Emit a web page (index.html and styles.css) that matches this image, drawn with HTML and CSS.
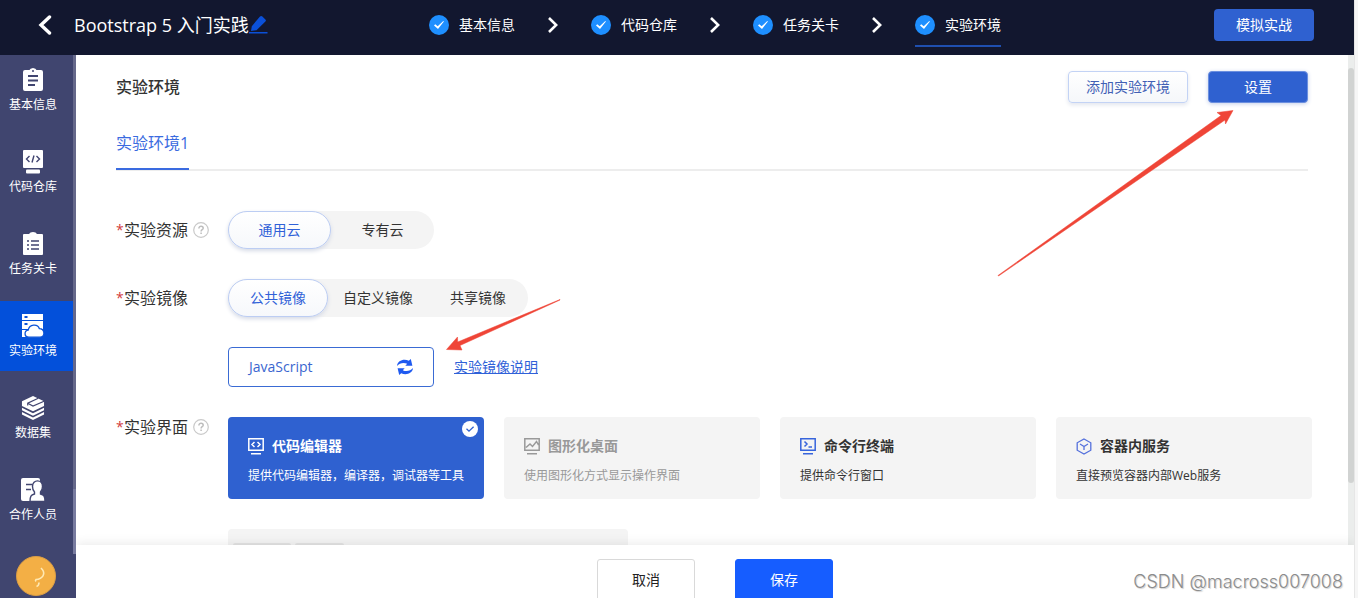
FILE: index.html
```html
<!DOCTYPE html>
<html lang="zh-CN">
<head>
<meta charset="utf-8">
<title>实验环境</title>
<link rel="stylesheet" href="styles.css">
</head>
<body>
<svg class="defs" aria-hidden="true">
  <symbol id="done" viewBox="0 0 20 20"><circle cx="10" cy="10" r="10" fill="#1e8fff"/><path d="M5 10.400l1.200-1.100 2.500 1.900 5.600-5.200.6.600-5.900 7.300z" fill="#fff"/></symbol>
  <symbol id="next" viewBox="0 0 10 16"><path d="M1 1l7.200 7L1 15" fill="none" stroke="#fff" stroke-width="2.600"/></symbol>
  <symbol id="help" viewBox="0 0 16 16"><circle cx="8" cy="8" r="7.300" fill="none" stroke="#c9c9c9" stroke-width="1.200"/><path d="M5.900 6.400c0-3 4.300-2.700 4.300-.2 0 1.500-2.100 1.500-2.100 3.200M8.100 10.600v1.500" fill="none" stroke="#bdbdbd" stroke-width="1.500"/></symbol>
</svg>
<div class="app">
  <header class="topbar">
    <div class="topbar-left">
      <button class="icon-btn back" aria-label="返回"><svg width="14" height="20" viewBox="0 0 14 20"><path d="M11.500 2L3 10l8.500 8" fill="none" stroke="#fff" stroke-width="3.400" stroke-linecap="round"/></svg></button>
      <h1 class="course">Bootstrap 5 入门实践</h1>
      <button class="icon-btn" aria-label="编辑"><svg width="19" height="20" viewBox="0 0 19 20" fill="#0b50d8"><path d="M2 16l.8-4.800L11 1.600q1.200-1.200 2.400 0l3 2.900q1 1 0 2L7.500 15.200z"/><path d="M0 17h18.500v1.500H0z"/></svg></button>
    </div>
    <nav class="steps">
      <a class="step" href="#"><svg width="20" height="20"><use href="#done"/></svg>基本信息</a>
      <svg class="next" width="10" height="16"><use href="#next"/></svg>
      <a class="step" href="#"><svg width="20" height="20"><use href="#done"/></svg>代码仓库</a>
      <svg class="next" width="10" height="16"><use href="#next"/></svg>
      <a class="step" href="#"><svg width="20" height="20"><use href="#done"/></svg>任务关卡</a>
      <svg class="next" width="10" height="16"><use href="#next"/></svg>
      <a class="step current" href="#"><svg width="20" height="20"><use href="#done"/></svg>实验环境</a>
    </nav>
    <div class="topbar-right"><button class="btn primary">模拟实战</button></div>
  </header>

  <div class="body">
    <aside class="sidebar">
      <nav class="side-nav">
        <a class="side-item" href="#"><svg width="22" height="24" viewBox="0 0 22 24"><path d="M3 2h4.500q.5-1.500 3.500-2 3 .5 3.500 2H19q2 0 2 2v17q0 2-2 2H3q-2 0-2-2V4q0-2 2-2z" fill="#fff"/><path d="M6 8h10M6 12.500h10M6 17h7" stroke="#414570" stroke-width="1.800"/><circle cx="11" cy="3" r="1" fill="#414570"/></svg>基本信息</a>
        <a class="side-item" href="#"><svg width="22" height="24" viewBox="0 0 22 24"><rect x="1" width="20" height="18" rx="1" fill="#fff"/><rect x="4" y="19.500" width="14" height="4" rx="1" fill="#fff"/><path d="M7.500 6L4.500 9l3 3M14.500 6l3 3-3 3M12 5.500l-2 7" fill="none" stroke="#414570" stroke-width="1.400"/></svg>代码仓库</a>
        <a class="side-item" href="#"><svg width="22" height="24" viewBox="0 0 22 24"><path d="M2 2h5q1-2 4-2t4 2h5q1 0 1 1v19q0 1-1 1H2q-1 0-1-1V3q0-1 1-1z" fill="#fff"/><path d="M5 9h2M9 9h8M5 13h2M9 13h8M5 17h2M9 17h8" stroke="#414570" stroke-width="1.600"/></svg>任务关卡</a>
        <a class="side-item active" href="#"><svg width="24" height="24" viewBox="0 0 24 24"><path d="M1 0h21v6H1zM1 7h21v8H1zM1 16h8v7H1z" fill="#fff"/><path d="M3.500 3h3M3.500 10h3" stroke="#0b53d8" stroke-width="1.800"/><path d="M8 23.200c-5.200 0-5-6.500-.8-7 1.200-6.300 9.500-6.600 11.200-1.500 5.600.2 6.200 8.500.6 8.500z" fill="#fff" stroke="#0b53d8" stroke-width="1.300"/></svg>实验环境</a>
        <a class="side-item" href="#"><svg width="24" height="24" viewBox="0 0 24 25"><path d="M12 0l11.500 5.500v5L12 16 .5 10.500v-5zM.5 12.300L12 18l11.500-5.700v2.600L12 20.600.5 14.900zM.5 16.700L12 22.400l11.500-5.700v2.600L12 25 .5 19.300z" fill="#fff"/><path d="M6.500 9.800V7.500L17.500 2.300M6.500 7.500l5.500 3 11.500-5" fill="none" stroke="#414570" stroke-width="1.200"/></svg>数据集</a>
        <a class="side-item" href="#"><svg width="24" height="24" viewBox="0 0 24 24"><path d="M2 0h15q2 0 2 2v12l-8 9H2q-2 0-2-2V2q0-2 2-2z" fill="#fff"/><path d="M5 6.500h6M5 11.500h5" stroke="#414570" stroke-width="1.700"/><path d="M11.500 8.500c0-7.500 10-7.500 10 0 0 3-1 4.500-2 5.500v2c3.500 1 4.500 2 4.500 7.500H9c0-5.500 1-6.500 4.500-7.500v-2c-1-1-2-2.500-2-5.500z" fill="#fff" stroke="#414570" stroke-width="1.400"/></svg>合作人员</a>
      </nav>
      <div class="side-track"><div class="side-thumb"></div></div>
      <button class="assist" aria-label="帮助"><svg width="38" height="38" viewBox="0 0 38 38"><path d="M24 11c6 6 1 11-5 11.500q-1 1 0 2M22 25.500q0 3-2.500 4" fill="none" stroke="#ffe9b4" stroke-width="1.600"/></svg></button>
    </aside>

    <main class="main">
      <div class="scroll">
        <div class="content">
          <div class="page-head">
            <h2>实验环境</h2>
            <div class="head-actions">
              <button class="btn ghost">添加实验环境</button>
              <button class="btn primary glow">设置</button>
            </div>
          </div>
          <div class="tabs"><a class="tab" href="#">实验环境1</a></div>

          <form class="form" id="env-form">
            <div class="row" role="radiogroup" aria-labelledby="res-label">
              <span class="label" id="res-label"><i>*</i>实验资源<svg width="16" height="16"><use href="#help"/></svg></span>
              <div class="segment two">
                <label class="seg"><input type="radio" name="resource" checked><span>通用云</span></label>
                <label class="seg"><input type="radio" name="resource"><span>专有云</span></label>
              </div>
            </div>
            <div class="row" role="radiogroup" aria-labelledby="img-label">
              <span class="label" id="img-label"><i>*</i>实验镜像</span>
              <div class="segment three">
                <label class="seg"><input type="radio" name="image" checked><span>公共镜像</span></label>
                <label class="seg"><input type="radio" name="image"><span>自定义镜像</span></label>
                <label class="seg"><input type="radio" name="image"><span>共享镜像</span></label>
              </div>
            </div>
            <div class="row picker-row">
              <button type="button" class="picker">JavaScript<svg width="18" height="18" viewBox="0 0 18 18" fill="#1f5af0"><path d="M1 8C1.500 2.500 8 .3 12.800 2.800L14.800 1l1.600 6.800H9.300l1.900-2C8 4.200 3.500 4.800 1 8z"/><path d="M17 10c-.5 5.500-7 7.700-11.800 5.200L3.200 17l-1.600-6.800h7.100l-1.900 2c3.200 1.600 7.700 1 10.200-2.200z"/></svg></button>
              <a class="doc-link" href="#">实验镜像说明</a>
            </div>
            <div class="row cards-row" role="radiogroup" aria-labelledby="ui-label">
              <span class="label" id="ui-label"><i>*</i>实验界面<svg width="16" height="16"><use href="#help"/></svg></span>
              <div class="cards">
                <label class="card selected"><input type="radio" name="ui" checked>
                  <span class="card-title"><svg width="16" height="17" viewBox="0 0 16 17" fill="none" stroke="#fff" stroke-width="1.500"><path d="M.8.8h14.400v11.400H.8zM3 15.700h10M6.500 4L4 6.500 6.500 9M9.500 4L12 6.500 9.500 9"/></svg>代码编辑器</span>
                  <span class="card-text">提供代码编辑器，编译器，调试器等工具</span>
                  <svg class="card-check" width="16" height="16" viewBox="0 0 16 16"><circle cx="8" cy="8" r="8" fill="#fff"/><path d="M4.500 7.800L7 10.200l4.600-4.400" fill="none" stroke="#2f61d0" stroke-width="1.300"/></svg>
                </label>
                <label class="card disabled"><input type="radio" name="ui" disabled>
                  <span class="card-title"><svg width="16" height="17" viewBox="0 0 16 17" fill="none" stroke="#999" stroke-width="1.500"><path d="M.8.8h14.400v11.400H.8zM3 15.700h10M2 9.500L6 6l2.500 2.500 4-5 2 3.500"/></svg>图形化桌面</span>
                  <span class="card-text">使用图形化方式显示操作界面</span>
                </label>
                <label class="card"><input type="radio" name="ui">
                  <span class="card-title"><svg width="16" height="17" viewBox="0 0 16 17" fill="none" stroke="#3764dc" stroke-width="1.500"><path d="M.8.8h14.400v11.400H.8zM3 15.700h10M4.500 3.500L7 6 4.500 8.500M8.500 9H12"/></svg>命令行终端</span>
                  <span class="card-text">提供命令行窗口</span>
                </label>
                <label class="card"><input type="radio" name="ui">
                  <span class="card-title"><svg width="16" height="17" viewBox="0 0 16 17" fill="none" stroke="#5470dc" stroke-width="1.300"><path d="M8 1l6.800 3.800v7.400L8 16l-6.800-3.800V4.800zM4 6l4 2.500L12 6M8 8.500V12"/></svg>容器内服务</span>
                  <span class="card-text">直接预览容器内部Web服务</span>
                </label>
              </div>
            </div>
            <div class="row">
              <span class="label"></span>
              <div class="more"><span></span><span></span></div>
            </div>
          </form>
        </div>
        <div class="track"><div class="thumb"></div></div>
      </div>
      <footer class="footer">
        <button class="foot-btn">取消</button>
        <button class="foot-btn save" form="env-form">保存</button>
      </footer>
    </main>
  </div>
  <div class="watermark">CSDN @macross007008</div>
  <svg class="arrows" width="1358" height="598" viewBox="0 0 1358 598" fill="#ef4537" stroke="#ef4537" stroke-width=".5" aria-hidden="true">
    <path d="M1233 110.500L1217 112.500 1221 115.500 998 275.500 998.500 276 1225 120 1225.500 124z"/>
    <path d="M446.500 349.500L457.500 337 457.700 342 560 299.500 560 300 460 345.500 462 350z"/>
  </svg>
</div>
</body>
</html>
```
FILE: styles.css
```css
* { box-sizing: border-box; }
body {
  margin: 0;
  background: #f6f6f6;
  color: #333;
  font: 14px/20px "Open Sans", "Noto Sans CJK SC", sans-serif;
}
h1, h2 { margin: 0; }
a { color: inherit; text-decoration: none; }
button { font: inherit; padding: 0; cursor: pointer; }
svg { flex: none; }
.defs { position: absolute; width: 0; height: 0; }

.app {
  position: relative;
  display: flex;
  flex-direction: column;
  height: 100vh;
  margin-right: 3px;
  background: #fff;
  border-right: 1px solid #e6e6e6;
  overflow: hidden;
}

/* top bar */
.topbar {
  display: flex;
  align-items: center;
  flex: none;
  height: 55px;
  padding: 0 40px 6px 38px;
  background: #12172f;
  color: #fff;
}
.topbar-left { display: flex; align-items: center; flex: 1 1 78px; }
.topbar-right { display: flex; justify-content: flex-end; flex: 1 1 0; }
.icon-btn { display: flex; border: 0; background: none; }
.back { margin-right: 22px; }
.course { font-size: 18px; line-height: 24px; font-weight: 400; white-space: nowrap; }
.steps { display: flex; align-items: center; gap: 33px; }
.step { position: relative; display: flex; align-items: center; gap: 10px; white-space: nowrap; }
.current::after {
  content: "";
  position: absolute;
  left: 0;
  right: 0;
  top: 30px;
  height: 2px;
  background: #1f4fb0;
}
.btn {
  min-width: 100px;
  height: 32px;
  padding: 0 17px;
  border: 1px solid transparent;
  border-radius: 4px;
}
.primary { background: #2f61d0; color: #fff; }
.glow { border-color: #6b8fdf; box-shadow: 0 1px 4px #c5d0ea; }
.ghost {
  border-color: #c3d3f5;
  background: linear-gradient(#fff, #f5f7fa);
  color: #4260b5;
  box-shadow: 0 2px 4px #e3e6ee;
}

/* sidebar */
.body { display: flex; flex: 1; min-height: 0; }
.sidebar { position: relative; z-index: 1; display: flex; flex: none; width: 76px; background: #40456f; color: #fff; }
.side-nav { display: flex; flex-direction: column; gap: 12px; flex: 1; }
.side-item {
  display: flex;
  flex-direction: column;
  align-items: center;
  gap: 3px;
  height: 70px;
  padding: 13px 7px 0 0;
  font-size: 12px;
}
.side-item.active { background: #0350da; }
.side-track { width: 3px; margin-bottom: 44px; background: #787b9f; }
.side-thumb { height: 87%; background: #65688a; }
.assist {
  position: absolute;
  left: 16px;
  bottom: 2px;
  width: 40px;
  height: 40px;
  border: 1px solid #d99d46;
  border-radius: 50%;
  background: #f3af45;
  overflow: hidden;
}

/* content */
.main { display: flex; flex-direction: column; flex: 1; min-width: 0; }
.scroll { display: flex; flex: 1; min-height: 0; overflow: hidden; }
.content { flex: 1; min-width: 0; padding: 16px 40px 0; }
.track { flex: none; width: 6px; padding-top: 13px; background: #ebedec; }
.thumb { height: 87%; border-radius: 3px; background: #d1d3d2; }
.page-head { display: flex; justify-content: space-between; align-items: center; }
.page-head h2 { font-size: 16px; line-height: 22px; font-weight: 500; }
.head-actions { display: flex; gap: 20px; }
.tabs { display: flex; margin-top: 24px; border-bottom: 2px solid #ededed; }
.tab {
  height: 43px;
  margin-bottom: -1px;
  padding-top: 6px;
  border-bottom: 2px solid #3a6be0;
  color: #3a6be0;
  font-size: 16px;
}
.form { display: flex; flex-direction: column; gap: 30px; padding-top: 40px; }
.row { display: flex; align-items: center; }
.label { display: flex; align-items: center; flex: none; width: 112px; font-size: 16px; white-space: nowrap; }
.label i { width: 8px; color: #d23c3c; font-size: 14px; font-style: normal; }
.label svg { margin-left: 5px; }
.segment { display: grid; grid-auto-flow: column; grid-auto-columns: 1fr; height: 38px; border-radius: 19px; background: #f4f4f4; }
.two { width: 206px; }
.three { width: 300px; }
.seg { display: grid; }
.seg input, .card input { position: absolute; opacity: 0; pointer-events: none; }
.seg span {
  display: flex;
  align-items: center;
  justify-content: center;
  border: 1px solid transparent;
  border-radius: 19px;
}
.seg input:checked + span {
  border-color: #bccdf3;
  background: linear-gradient(#fff, #f6f8fb);
  color: #2f61d8;
  box-shadow: 0 2px 4px #d5dae6;
}
.picker-row { padding-left: 112px; gap: 20px; }
.picker {
  display: flex;
  align-items: center;
  justify-content: space-between;
  width: 206px;
  height: 40px;
  padding: 0 19px 0 20px;
  border: 1px solid #3a6bd4;
  border-radius: 4px;
  background: #fff;
  color: #3a66cf;
}
.doc-link { color: #2f61d8; text-decoration: underline; }
.cards-row { align-items: flex-start; margin-right: -4px; }
.cards { display: grid; grid-template-columns: repeat(4, 1fr); gap: 20px; flex: 1; }
.card {
  position: relative;
  display: flex;
  flex-direction: column;
  gap: 10px;
  height: 82px;
  padding: 19px 20px 0;
  border-radius: 4px;
  background: #f4f4f4;
  white-space: nowrap;
}
.card-title { display: flex; align-items: center; gap: 8px; font-weight: 700; }
.card-text { font-size: 12px; }
.selected { background: #2f61d0; color: #fff; }
.disabled { color: #999; }
.card-check { position: absolute; top: 4px; right: 6px; }
.more { display: flex; gap: 4px; width: 400px; height: 80px; padding: 14px 5px; border-radius: 4px; background: #f4f4f4; }
.more span { width: 58px; height: 24px; border-radius: 2px; background: #e3e3e3; }
.more span + span { width: 49px; }

/* footer */
.footer {
  position: relative;
  display: flex;
  justify-content: center;
  gap: 40px;
  flex: none;
  height: 53px;
  padding-top: 14px;
  background: #fff;
  box-shadow: 0 -2px 10px rgba(0, 0, 0, 0.08);
}
.foot-btn {
  width: 98px;
  height: 42px;
  border: 1px solid #d9d9d9;
  border-radius: 3px;
  background: #fff;
  color: #222;
}
.save { border-color: #165dff; background: #165dff; color: #fff; }

/* overlays */
.watermark {
  position: absolute;
  right: 11px;
  bottom: 4px;
  color: #8c8c8c;
  font: 18px/24px "Inter", sans-serif;
  font-weight: 300;
  text-shadow: 1px 1px 1px #d0d0d0;
}
.arrows { position: absolute; left: 0; top: 0; pointer-events: none; }
```
